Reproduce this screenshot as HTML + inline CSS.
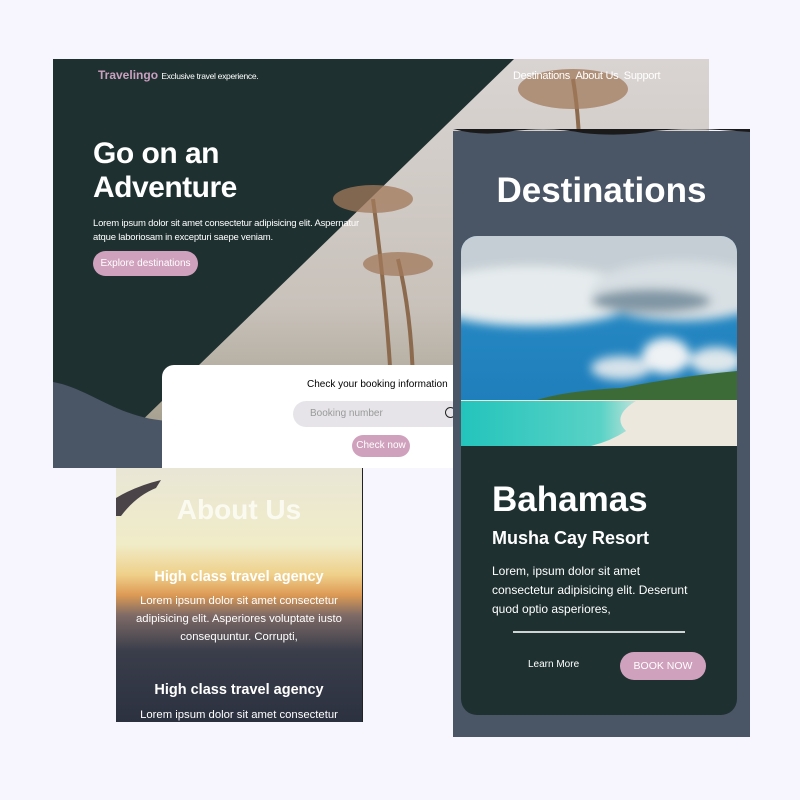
<!DOCTYPE html>
<html><head><meta charset="utf-8"><style>
*{margin:0;padding:0;box-sizing:border-box}
body{width:800px;height:800px;background:#f7f5fd;position:relative;overflow:hidden;font-family:"Liberation Sans",sans-serif;color:#fff}
.abs{position:absolute}
</style></head><body>
<!-- hero -->
<div class="abs" style="left:53px;top:59px;width:656px;height:409px;background:#1f3030;overflow:hidden">
<svg class="abs" style="left:0;top:0" width="656" height="409">
<defs>
<linearGradient id="sky" x1="0" y1="0" x2="0" y2="1"><stop offset="0" stop-color="#d9d4d2"/><stop offset="0.6" stop-color="#c9c2bb"/><stop offset="1" stop-color="#9a9480"/></linearGradient>
</defs>
<polygon points="461,0 656,0 656,409 40,409" fill="url(#sky)"/>
<g stroke="#8c6a4e" stroke-width="4" fill="none">
<path d="M340 360 Q335 250 320 140"/><path d="M360 360 Q362 270 345 200"/><path d="M525 160 Q530 80 520 20"/>
</g>
<g fill="#a27a5b" opacity="0.75">
<ellipse cx="320" cy="140" rx="40" ry="14"/><ellipse cx="345" cy="205" rx="35" ry="12"/><ellipse cx="520" cy="30" rx="55" ry="20"/>
</g>
<path d="M0 323 C40 330 70 365 130 362 L160 362 L160 409 L0 409Z" fill="#4a5566"/>
</svg>
<div class="abs" style="left:45px;top:9px;font-size:12px;font-weight:bold;color:#c9a0bf">Travelingo <span style="font-size:8.5px;font-weight:normal;color:#fff;letter-spacing:-0.3px">Exclusive travel experience.</span></div>
<div class="abs" style="left:460px;top:11px;font-size:11px;letter-spacing:-0.3px">Destinations &nbsp;About Us &nbsp;Support</div>
<div class="abs" style="left:40px;top:78px;font-size:30px;font-weight:bold;line-height:34px;letter-spacing:-0.5px">Go on an<br>Adventure</div>
<div class="abs" style="left:40px;top:158px;font-size:9.5px;line-height:14px;width:275px;letter-spacing:-0.2px">Lorem ipsum dolor sit amet consectetur adipisicing elit. Aspernatur atque laboriosam in excepturi saepe veniam.</div>
<div class="abs" style="left:40px;top:192px;width:105px;height:25px;border-radius:13px;background:#d0a1bd;font-size:10px;line-height:25px;text-align:center">Explore destinations</div>
</div>
<!-- booking -->
<div class="abs" style="left:162px;top:365px;width:300px;height:103px;background:#fff;border-radius:12px 0 0 0;color:#000">
<div class="abs" style="left:145px;top:14px;font-size:10px;white-space:nowrap">Check your booking information</div>
<div class="abs" style="left:131px;top:36px;width:170px;height:26px;border-radius:13px;background:#e6e4e8;color:#999;font-size:10px;line-height:26px;padding-left:17px">Booking number</div>
<div class="abs" style="left:283px;top:42px;width:11px;height:11px;border:1.5px solid #222;border-radius:50%"></div>
<div class="abs" style="left:190px;top:70px;width:58px;height:22px;border-radius:11px;background:#d0a1bd;color:#fff;font-size:10px;line-height:22px;text-align:center">Check now</div>
</div>
<!-- about -->
<div class="abs" style="left:116px;top:468px;width:247px;height:254px;overflow:hidden;background:linear-gradient(180deg,#e9e6d6 0%,#f0ecc8 30%,#efd08a 42%,#dd9a55 50%,#7e6a66 58%,#3a3e4b 72%,#2c3140 100%);text-align:center;border-right:1px solid #222">
<svg class="abs" style="left:0;top:0" width="60" height="50"><path d="M0 30 Q20 18 45 12 L40 20 Q20 28 5 48 L0 48Z" fill="#4a4448"/></svg>
<div style="margin-top:26px;font-size:28px;font-weight:bold;color:#fbfaf0">About Us</div>
<div style="margin-top:43px;font-size:14.5px;font-weight:bold">High class travel agency</div>
<div style="margin-top:7px;font-size:11.3px;line-height:18px;padding:0 16px">Lorem ipsum dolor sit amet consectetur adipisicing elit. Asperiores voluptate iusto consequuntur. Corrupti,</div>
<div style="margin-top:36px;font-size:14.5px;font-weight:bold">High class travel agency</div>
<div style="margin-top:8px;font-size:11.3px;line-height:18px">Lorem ipsum dolor sit amet consectetur</div>
</div>
<!-- destinations -->
<div class="abs" style="left:453px;top:131px;width:297px;height:606px;background:#4a5566">
<svg class="abs" style="left:0;top:-2px" width="297" height="8"><path d="M0 0 Q30 8 60 2 Q100 -2 130 4 Q170 8 200 2 Q240 -2 297 3 L297 0Z" fill="#1a1a1a"/></svg>
<div class="abs" style="left:0;top:40px;width:297px;text-align:center;font-size:35px;font-weight:bold">Destinations</div>
<div class="abs" style="left:8px;top:105px;width:276px;height:479px;background:#1f3030;border-radius:16px;overflow:hidden">
<svg width="276" height="210" style="display:block">
<defs>
<linearGradient id="bs" x1="0" y1="0" x2="0" y2="1"><stop offset="0" stop-color="#2a8fc8"/><stop offset="1" stop-color="#1c7ab8"/></linearGradient>
<linearGradient id="wt" x1="0" y1="0" x2="1" y2="0"><stop offset="0" stop-color="#23c4bc"/><stop offset="0.8" stop-color="#5ad2c6"/><stop offset="1" stop-color="#bfe3db"/></linearGradient>
<filter id="bl"><feGaussianBlur stdDeviation="5"/></filter>
</defs>
<rect width="276" height="210" fill="url(#bs)"/>
<g filter="url(#bl)">
<rect x="-10" y="-10" width="296" height="50" fill="#c4ced4"/>
<ellipse cx="70" cy="60" rx="110" ry="30" fill="#e6ecee"/>
<ellipse cx="220" cy="55" rx="90" ry="30" fill="#d8e0e4"/>
<ellipse cx="190" cy="65" rx="60" ry="12" fill="#8096a4"/>
<ellipse cx="205" cy="120" rx="24" ry="18" fill="#eef2f4"/>
<ellipse cx="160" cy="132" rx="30" ry="12" fill="#d6e2ea"/>
<ellipse cx="255" cy="125" rx="26" ry="14" fill="#dde7ec"/>
</g>
<path d="M70 166 Q100 155 160 152 Q220 140 276 135 L276 168 L70 168Z" fill="#3c6b38"/>
<rect y="164" width="276" height="46" fill="#ece8de"/>
<path d="M0 165 L175 165 Q150 180 165 195 Q150 205 130 210 L0 210Z" fill="url(#wt)"/>
</svg>
<div class="abs" style="left:31px;top:244px;font-size:35px;font-weight:bold">Bahamas</div>
<div class="abs" style="left:31px;top:292px;font-size:18px;font-weight:bold">Musha Cay Resort</div>
<div class="abs" style="left:31px;top:326px;width:205px;font-size:12px;line-height:19px">Lorem, ipsum dolor sit amet consectetur adipisicing elit. Deserunt quod optio asperiores,</div>
<div class="abs" style="left:52px;top:395px;width:172px;height:2px;background:#cfd3d3"></div>
<div class="abs" style="left:67px;top:423px;font-size:10px">Learn More</div>
<div class="abs" style="left:159px;top:416px;width:86px;height:28px;border-radius:14px;background:#d0a1bd;font-size:10.5px;line-height:28px;text-align:center">BOOK NOW</div>
</div>
</div>
</body></html>
